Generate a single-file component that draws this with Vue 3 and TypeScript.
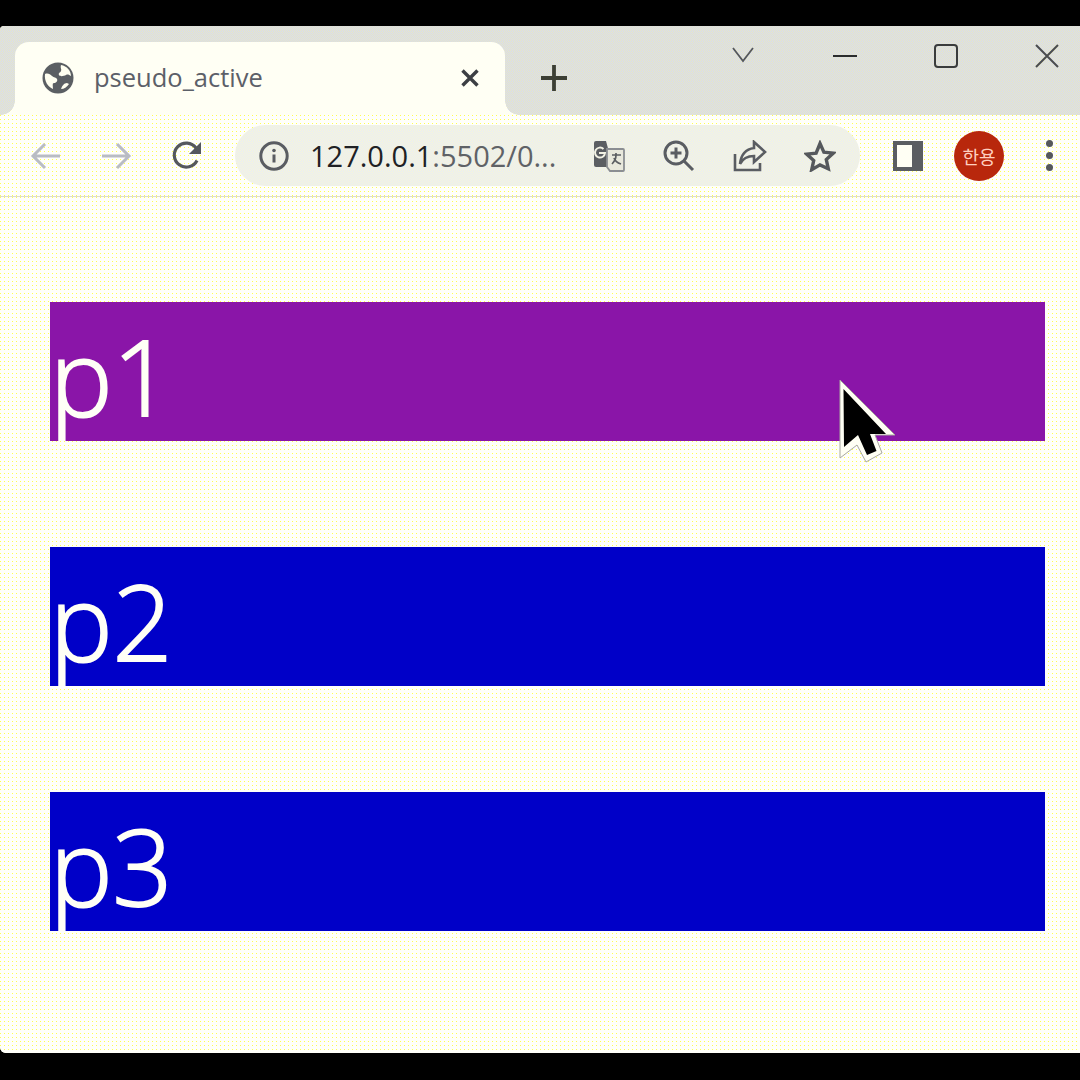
<template>
  <div class="shot">
    <div class="black top"></div>
    <div class="win">
      <div class="strip">
        <div class="tab">
          <svg class="globe" width="32" height="32" viewBox="0 0 32 32">
            <circle cx="16" cy="16" r="15.500" fill="#5b5f63" />
            <path d="M3 12c3-1 5 0 7 2s4 1 5 3-1 4-3 4-1 3-1 6c-5-2-9-8-8-15z" fill="#fffff0" />
            <path d="M19 3c-1 3 1 4 0 6s-3 2-2 4 5 1 7 0 3 0 5 1c0-5-4-10-10-11z" fill="#fffff0" />
            <path d="M19 27c1-3 3-6 6-6l2 1c-2 3-5 5-8 5z" fill="#fffff0" />
          </svg>
          <span class="tab-title">pseudo_active</span>
          <svg class="tab-x" width="20" height="20" viewBox="0 0 20 20">
            <path d="M2.500 2.500l15 15M17.500 2.500l-15 15" stroke="#3c3f43" stroke-width="3.400" />
          </svg>
        </div>
        <svg class="plus" width="28" height="28" viewBox="0 0 28 28">
          <path d="M14 1v26M1 14h26" stroke="#3c3f34" stroke-width="3.800" />
        </svg>
        <svg class="chev" width="22" height="16" viewBox="0 0 22 16">
          <path d="M1 1l10 13L21 1" fill="none" stroke="#55585c" stroke-width="1.800" />
        </svg>
        <svg class="wbtn min" width="24" height="24" viewBox="0 0 24 24">
          <path d="M0 12h24" stroke="#2a2c2c" stroke-width="2" />
        </svg>
        <svg class="wbtn max" width="24" height="24" viewBox="0 0 24 24">
          <rect x="1" y="1" width="22" height="22" rx="3" fill="none" stroke="#3a3c3c" stroke-width="2" />
        </svg>
        <svg class="wbtn cls" width="24" height="24" viewBox="0 0 24 24">
          <path d="M1 1l22 22M23 1L1 23" stroke="#4a4c4e" stroke-width="2" />
        </svg>
      </div>

      <div class="toolbar">
        <svg class="nav" width="32" height="30" viewBox="0 0 32 30">
          <path d="M30 15H3M15 3L3 15l12 12" fill="none" stroke="#b9bcc4" stroke-width="3" />
        </svg>
        <svg class="nav fwd" width="32" height="30" viewBox="0 0 32 30">
          <path d="M2 15h27M17 3l12 12-12 12" fill="none" stroke="#b9bcc4" stroke-width="3" />
        </svg>
        <svg class="nav rel" width="32" height="32" viewBox="0 0 32 32">
          <path d="M26 20.500A12 12 0 1 1 25 8" fill="none" stroke="#55585e" stroke-width="3.200" />
          <path d="M30 2v12H18z" fill="#55585e" />
        </svg>

        <div class="omni">
          <svg class="info" width="30" height="30" viewBox="0 0 30 30">
            <circle cx="15" cy="15" r="13.200" fill="none" stroke="#5a5d62" stroke-width="3" />
            <path d="M15 13.500v8" stroke="#5a5d62" stroke-width="3" />
            <circle cx="15" cy="9.500" r="1.800" fill="#5a5d62" />
          </svg>
          <span class="url"><b>127.0.0.1</b>:5502/0...</span>
          <svg class="oi tr" width="32" height="32" viewBox="0 0 32 32">
            <path d="M1 3a2 2 0 0 1 2-2h10l7 26H3a2 2 0 0 1-2-2z" fill="#5b5e62" />
            <path d="M14 9h16a1 1 0 0 1 1 1v20a1 1 0 0 1-1 1H17l-3-4z" fill="#e8e8dc" stroke="#8b8e92" stroke-width="1.800" />
            <path d="M6 13h6a5 5 0 1 1-1.500-4" fill="none" stroke="#f2f2e4" stroke-width="2" />
            <path d="M19 15h9M23 13v2c0 4-2 7-4 9M21 18c1 3 4 5 7 6" fill="none" stroke="#5b5e62" stroke-width="1.700" />
          </svg>
          <svg class="oi zm" width="32" height="32" viewBox="0 0 32 32">
            <circle cx="13" cy="13" r="11" fill="none" stroke="#5a5d62" stroke-width="3" />
            <path d="M7.500 13h11M13 7.500v11M21 21l9 9" stroke="#5a5d62" stroke-width="3" />
          </svg>
          <svg class="oi sh" width="34" height="32" viewBox="0 0 34 32">
            <path d="M2 14v16h25v-7" fill="none" stroke="#5a5d62" stroke-width="2.600" />
            <path d="M21 2l11 10-11 10v-6c-7 0-11 2-14 8 1-9 6-15 14-16z" fill="none" stroke="#5a5d62" stroke-width="2.600" />
          </svg>
          <svg class="oi st" width="32" height="32" viewBox="0 0 32 32">
            <path d="M16 3.500l3.900 8.600 9.400 1-7 6.400 2 9.200L16 24.900 7.700 29.700l2-9.200-7-6.400 9.400-1z" fill="none" stroke="#55585c" stroke-width="3.400" />
          </svg>
        </div>

        <svg class="panel" width="30" height="30" viewBox="0 0 30 30">
          <path d="M0 0h30v30H0z" fill="#5b5e62" />
          <path d="M4 4h15v22H4z" fill="#fffff4" />
        </svg>
        <div class="avatar">한용</div>
        <div class="dots"><i></i><i></i><i></i></div>
      </div>

      <div class="page">
        <p v-for="(item, index) in items" :key="item" class="row" :class="{ on: index === 0 }">{{ item }}</p>
      </div>
    </div>
    <div class="black bottom"></div>

    <svg class="cursor" width="60" height="88" viewBox="838 378 60 88">
      <path d="M840 380L895 435H875L882 453L866 462L857 445L840 458Z" fill="#fffff4" stroke="#a8a8a0" stroke-width="1" />
      <path d="M843.500 389L886 434H870L876.500 451L867 455L858 435L844 447Z" fill="#000" />
    </svg>
  </div>
</template>

<script setup lang="ts">
const items: string[] = ['p1', 'p2', 'p3']
</script>

<style scoped>
.shot {
  position: relative;
  width: 1080px;
  height: 1080px;
  display: flex;
  flex-direction: column;
  overflow: hidden;
  font-family: "Open Sans", "Noto Sans", sans-serif;
}
.black {
  background: #000;
  flex: none;
}
.top {
  height: 26px;
}
.bottom {
  height: 27px;
}
.win {
  flex: 1;
  display: flex;
  flex-direction: column;
  border-radius: 4px 0 0 6px;
  overflow: hidden;
  background: #fffff4;
}
.strip {
  height: 89px;
  flex: none;
  display: flex;
  align-items: flex-start;
  padding: 16px 0 0 15px;
  box-sizing: border-box;
  background: repeating-conic-gradient(#d6daf0 0 25%, #e8e8c4 0 50%) 0 0 / 2px 2px;
}
.tab {
  position: relative;
  width: 490px;
  height: 73px;
  display: flex;
  align-items: center;
  padding: 0 25px 2px 27px;
  box-sizing: border-box;
  border-radius: 14px 14px 0 0;
  background: #fffff4;
}
.tab::before,
.tab::after {
  content: "";
  position: absolute;
  bottom: 0;
  width: 14px;
  height: 14px;
}
.tab::before {
  left: -14px;
  background: radial-gradient(circle at 0 0, transparent 13.500px, #fffff4 14px);
}
.tab::after {
  right: -14px;
  background: radial-gradient(circle at 100% 0, transparent 13.500px, #fffff4 14px);
}
.tab-title {
  margin: 0 0 2px 20px;
  font-size: 25.500px;
  color: #5c6068;
  flex: 1;
}
.plus {
  margin: 22px 0 0 35px;
}
.chev {
  margin: 5px 0 0 164px;
}
.wbtn {
  margin-top: 2px;
}
.min {
  margin-left: 79px;
}
.max {
  margin-left: 77px;
}
.cls {
  margin-left: 77px;
}
.toolbar {
  height: 82px;
  flex: none;
  display: flex;
  align-items: center;
  padding: 0 0 0 30px;
  box-sizing: border-box;
  border-bottom: 1px solid #dcdcd0;
  background-color: #fffffa;
  background-image: conic-gradient(at 1px 1px, transparent 75%, #ffff50 0);
  background-size: 4px 4px;
}
.fwd {
  margin-left: 38px;
}
.rel {
  margin-left: 39px;
}
.omni {
  width: 625px;
  height: 61px;
  margin-left: 32px;
  display: flex;
  align-items: center;
  padding-left: 24px;
  box-sizing: border-box;
  border-radius: 31px;
  background: repeating-conic-gradient(#e8ebf6 0 25%, #f7f7d8 0 50%) 0 0 / 2px 2px;
}
.url {
  margin-left: 21px;
  width: 262px;
  font-size: 29px;
  color: #5f6266;
  white-space: nowrap;
}
.url b {
  font-weight: 400;
  color: #202124;
}
.oi {
  flex: none;
}
.tr {
  margin-left: 21px;
}
.zm {
  margin-left: 38px;
}
.sh {
  margin-left: 38px;
}
.st {
  margin-left: 37px;
}
.panel {
  margin-left: 33px;
}
.avatar {
  width: 50px;
  height: 50px;
  margin-left: 31px;
  border-radius: 50%;
  background: #b8270c;
  color: #ffd0c0;
  font-family: "Noto Sans CJK KR", sans-serif;
  font-size: 18px;
  display: flex;
  align-items: center;
  justify-content: center;
}
.dots {
  margin-left: 42px;
  display: flex;
  flex-direction: column;
  gap: 5px;
}
.dots i {
  width: 7px;
  height: 7px;
  border-radius: 50%;
  background: #55585c;
}
.page {
  flex: 1;
  display: flex;
  flex-direction: column;
  gap: 106px;
  padding: 105px 35px 0 50px;
  background-color: #fffffa;
  background-image: conic-gradient(at 1px 1px, transparent 75%, #ffff50 0);
  background-size: 4px 4px;
}
.row {
  margin: 0;
  height: 139px;
  overflow: hidden;
  font-size: 105px;
  font-weight: 300;
  -webkit-text-stroke: 2px #fffff6;
  line-height: 148px;
  color: #fffff6;
  background: #0000c8;
}
.row.on {
  background: #8a15a8;
}
.cursor {
  position: absolute;
  left: 838px;
  top: 378px;
}
</style>
<style>
html,
body {
  margin: 0;
  background: #000;
}
</style>
